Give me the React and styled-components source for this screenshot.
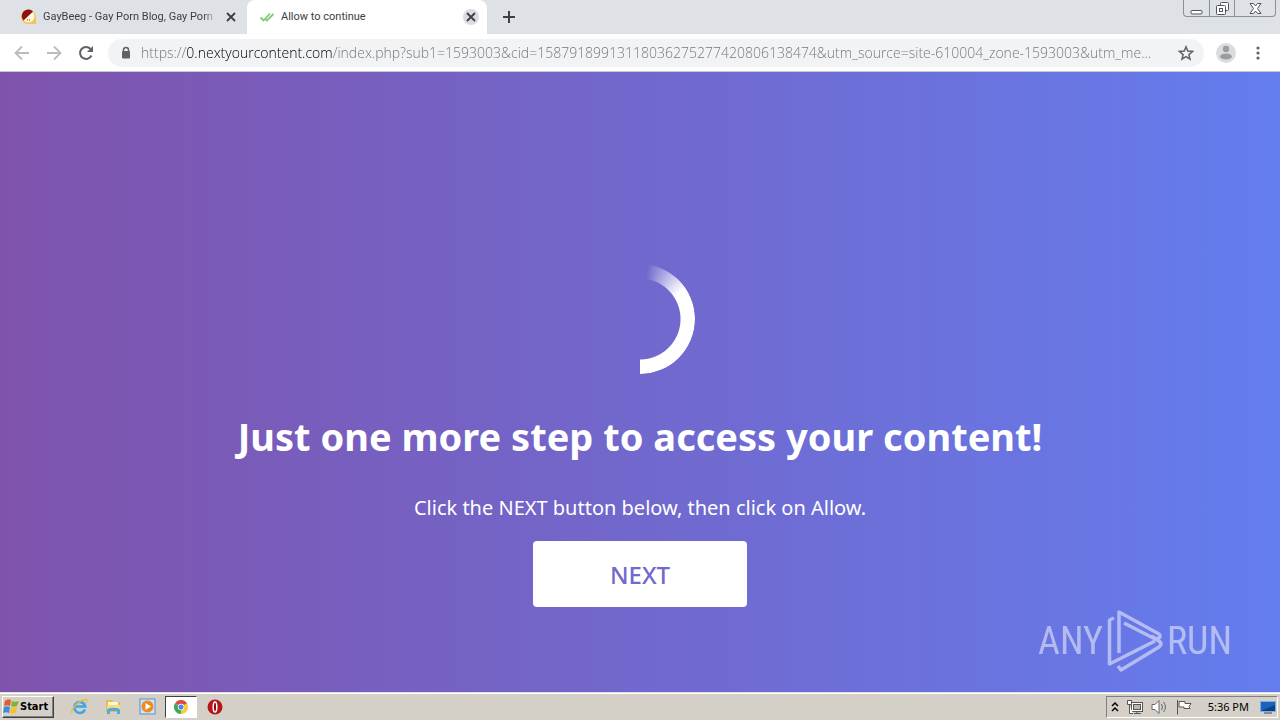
import React from 'react';
import styled, { createGlobalStyle } from 'styled-components'

const GlobalStyle = createGlobalStyle`
* { box-sizing: border-box; }
body {
  margin: 0;
  font-family: "Noto Sans", "Open Sans", sans-serif;
}
button {
  font-family: inherit;
  padding: 0;
  border: 0;
  background: none;
}
svg { display: block; flex: none; }
`

const Desktop = styled.div`
display: flex;
flex-direction: column;
min-height: 100vh;
`

const TabStrip = styled.div`
display: flex;
height: 34px;
background: #dee1e6;
`

const Tab = styled.div`
display: flex;
align-items: center;
gap: 6px;
width: ${props => props.$active ? '240px' : '247px'};
padding: 0 8px 0 ${props => props.$active ? '12px' : '20px'};
border-radius: 8px 8px 0 0;
background: ${props => props.$active ? '#ffffff' : 'transparent'};
`

const TabTitle = styled.button`
flex: 1;
min-width: 0;
overflow: hidden;
white-space: nowrap;
text-align: left;
font: 11px "Roboto", sans-serif;
line-height: 16px;
color: #3c4043;
`

const FadedTitle = styled(TabTitle)`
mask-image: linear-gradient(90deg, #000 92%, transparent);
`

const RoundButton = styled.button`
display: flex;
flex: none;
align-items: center;
justify-content: center;
width: 16px;
height: 16px;
border-radius: 50%;
background: ${props => props.$filled ? '#dadce0' : 'transparent'};
color: #3c4043;
`

const NewTab = styled(RoundButton)`
width: 28px;
height: 34px;
margin-left: 8px;
`

const WindowControls = styled.div`
display: flex;
height: 17px;
margin: 0 4px 0 auto;
border: 1px solid #8b8f9c;
border-top: 0;
border-radius: 0 0 4px 4px;
`

const WindowButton = styled.button`
display: flex;
align-items: center;
justify-content: center;
width: ${props => props.$wide ? '41px' : '25px'};
& + & { border-left: 1px solid #8b8f9c; }
`

const Toolbar = styled.div`
display: flex;
align-items: center;
height: 38px;
padding: 0 12px;
background: #ffffff;
border-bottom: 1px solid #c9c9d6;
`

const ToolButton = styled.button`
display: flex;
flex: none;
justify-content: center;
width: 20px;
color: ${props => props.$muted ? '#babcbe' : '#5f6368'};
`

const Navigation = styled.nav`
display: flex;
gap: 12px;
margin-right: 12px;
`

const AddressBar = styled.label`
display: flex;
flex: 1;
align-items: center;
height: 28px;
padding: 0 10px 0 12px;
border-radius: 14px;
background: #f1f3f4;
`

/* the host part of the address is darker than the rest */
const Address = styled.input`
flex: 1;
min-width: 0;
height: 24px;
margin: 0 14px 0 9px;
padding: 0;
border: 0;
outline: 0;
font: 300 14px "Open Sans", sans-serif;
color: transparent;
background: linear-gradient(90deg, #6f7377 45px, #000000 45px, #000000 192px, #6f7377 192px);
background-clip: text;
`

const Avatar = styled.button`
width: 20px;
margin: 0 12px;
`

const Page = styled.main`
position: relative;
display: flex;
flex: 1;
flex-direction: column;
align-items: center;
padding: 192px 20px 85px;
background: linear-gradient(90deg, #7f53ac, #647dee);
color: #ffffff;
text-align: center;
`

const Spinner = styled.div`
width: 110px;
height: 110px;
border-radius: 50%;
background: conic-gradient(transparent 8deg, #ffffff 56deg, #ffffff 180deg, transparent 180deg);
mask-image: radial-gradient(circle, transparent 40px, #000 41px);
`

const Heading = styled.h1`
margin: 34px 0 0;
font-size: 38px;
line-height: 56px;
`

const Hint = styled.p`
margin: 30px 0 0;
font-size: 20px;
line-height: 28px;
`

const NextButton = styled.button`
width: 214px;
height: 66px;
margin-top: 19px;
border-radius: 4px;
background: #ffffff;
color: #7268cd;
font-size: 24px;
font-weight: 500;
`

const Watermark = styled.div`
position: absolute;
right: 48px;
bottom: 20px;
display: flex;
align-items: center;
gap: 4px;
opacity: 0.5;
font: 38px "Roboto Condensed", "Liberation Sans Narrow", sans-serif;
`

const Taskbar = styled.footer`
display: flex;
align-items: center;
height: 28px;
padding: 0 2px;
background: #d4d0c8;
border-top: 1px solid #e4e2dd;
box-shadow: inset 0 1px #ffffff;
`

const StartButton = styled.button`
display: flex;
align-items: center;
width: 52px;
height: 22px;
margin-right: 9px;
border: 1px solid;
border-color: #ffffff #404040 #404040 #ffffff;
box-shadow: inset -1px -1px #808080;
font: bold 11px "DejaVu Sans Condensed", sans-serif;
color: #000000;
`

const TaskButton = styled.button`
display: flex;
align-items: center;
justify-content: center;
width: 32px;
height: 22px;
margin-right: 2px;
border: 1px solid transparent;
${props => props.$pressed && `
  background: #ffffff;
  border-color: #404040 #ffffff #ffffff #404040;
`}
`

const Tray = styled.div`
display: flex;
align-items: center;
gap: 8px;
height: 22px;
margin-left: auto;
padding: 0 1px 0 4px;
border: 1px solid;
border-color: #808080 #ffffff #ffffff #808080;
`

const Clock = styled.time`
margin: 0 3px 0 8px;
font: 11px "Noto Sans", sans-serif;
color: #000000;
`

const Cross = () => (
    <svg width="10" height="10" viewBox="0 0 10 10" stroke="currentColor" strokeWidth="1.800">
        <path d="M1 1l8 8M9 1L1 9" />
    </svg>
)

const SiteIcon = () => (
    <svg width="17" height="16" viewBox="0 0 17 16">
        <path d="M1 8a7.500 7.500 0 0 1 15 0v7H8a7 7 0 0 1-7-7z" fill="#f3c35c" />
        <circle cx="8.500" cy="7.500" r="6" fill="#fff4df" />
        <path d="M3.500 11.500A6.500 6.500 0 0 1 13 2.500z" fill="#8d1010" />
        <path d="M7 11h1M9 11h1" stroke="#b22" />
    </svg>
)

const Checks = () => (
    <svg width="16" height="16" viewBox="0 0 16 16" fill="none" stroke="#7fcb78" strokeWidth="1.800">
        <path d="M1.500 8.500l3 3L11 4.500M6.500 10l1.500 1.500L14.500 5" />
    </svg>
)

const Arrow = ({ flip }) => (
    <svg width="16" height="16" viewBox="0 0 16 16" fill="none" stroke="currentColor" strokeWidth="1.800">
        <path d={flip ? 'M1 8h13M8 1.500L14.500 8 8 14.500' : 'M15 8H2M8 1.500L1.500 8 8 14.500'} />
    </svg>
)

const Reload = () => (
    <svg width="16" height="16" viewBox="0 0 16 16">
        <path d="M13.500 10.500A6 6 0 1 1 12.600 4" fill="none" stroke="currentColor" strokeWidth="2" />
        <path d="M15 1v6H9z" fill="currentColor" />
    </svg>
)

const Lock = () => (
    <svg width="12" height="14" viewBox="0 0 12 14">
        <path d="M3.500 6V4a2.500 2.500 0 0 1 5 0v2" fill="none" stroke="#5f6368" strokeWidth="1.500" />
        <rect x="2" y="5" width="8" height="7.500" rx="1" fill="#5f6368" />
    </svg>
)

const Star = () => (
    <svg width="16" height="16" viewBox="0 0 16 16" fill="none" stroke="#5f6368" strokeWidth="1.500">
        <path d="M8 1.800l1.800 4.300 4.700.4-3.600 3.100 1.100 4.600L8 11.700l-4 2.500 1.100-4.600L1.500 6.500l4.700-.4z" />
    </svg>
)

const Person = () => (
    <svg width="20" height="20" viewBox="0 0 20 20">
        <circle cx="10" cy="10" r="10" fill="#dadce0" />
        <circle cx="10" cy="6" r="3.200" fill="#9a9da1" />
        <ellipse cx="10" cy="13.500" rx="6" ry="3" fill="#9a9da1" />
    </svg>
)

const Dots = () => (
    <svg width="4" height="14" viewBox="0 0 4 14" fill="#5f6368">
        <circle cx="2" cy="2" r="1.600" />
        <circle cx="2" cy="7" r="1.600" />
        <circle cx="2" cy="12" r="1.600" />
    </svg>
)

const PlayLogo = () => (
    <svg width="56" height="62" viewBox="0 0 56 62" fill="none" stroke="#ffffff" strokeWidth="3.500" strokeLinejoin="round">
        <path d="M7 8L2.500 10V54L48 31" />
        <path d="M12 43V2L52 24Q55 27 50 29L44 26" />
        <path d="M11 56L14 60L52 37Q56 34 52 31L17 13" />
    </svg>
)

const Flag = () => (
    <svg width="17" height="17" viewBox="0 0 17 17">
        <path d="M8 2C5 1 3 2 2 3L1 8c2-1 4-1 6 0z" fill="#e8592b" />
        <path d="M9 3c2 1 4 1 7 0l-2 5c-2 1-4 1-6 0z" fill="#7cb82f" />
        <path d="M1 9c2-1 4-1 6 0l-1 6c-2-1-4-1-6 0z" fill="#3b8ede" />
        <path d="M8 9c2 1 4 1 6 0l-1 5c-2 2-4 2-6 1z" fill="#fbc12d" />
    </svg>
)

const Explorer = () => (
    <svg width="17" height="17" viewBox="0 0 17 17" fill="none">
        <path d="M14 11.500A5.500 5.500 0 1 1 14.300 8.500H5" stroke="#3fa5e6" strokeWidth="2.600" />
        <path d="M1 15C-1 12 7 3 14 1.500c3-.5 2 2 1 3.500" stroke="#e9bd3a" strokeWidth="1.300" />
    </svg>
)

const Folder = () => (
    <svg width="17" height="17" viewBox="0 0 17 17">
        <path d="M1 2h6l1 2h7v10H1z" fill="#e3bd54" />
        <path d="M3 4h10v3H3z" fill="#fff7d0" />
        <path d="M2 7h13v6H2z" fill="#f3dc88" />
        <path d="M2 16v-4c0-3 13-3 13 0v4h-3v-3H5v3z" fill="#55a9df" />
    </svg>
)

const Player = () => (
    <svg width="17" height="17" viewBox="0 0 17 17">
        <rect x="1" y="1" width="15" height="15" fill="#cfe4f7" stroke="#5590cf" />
        <circle cx="8.500" cy="8.500" r="6" fill="#ef8b1c" />
        <path d="M6.500 5v7l5.500-3.500z" fill="#fff" />
    </svg>
)

const Chrome = () => (
    <svg width="14" height="14" viewBox="0 0 16 16">
        <path d="M8 8L1.070 4A8 8 0 0 1 14.930 4z" fill="#df4a3c" />
        <path d="M8 8l6.930-4A8 8 0 0 1 8 16z" fill="#fbcc35" />
        <path d="M8 8v8A8 8 0 0 1 1.070 4z" fill="#3fa757" />
        <circle cx="8" cy="8" r="3.700" fill="#fff" />
        <circle cx="8" cy="8" r="2.900" fill="#4a86e8" />
    </svg>
)

const Opera = () => (
    <svg width="16" height="16" viewBox="0 0 16 16">
        <circle cx="8" cy="8" r="7.500" fill="#b5141b" />
        <ellipse cx="8" cy="8" rx="1.800" ry="5" fill="#8a0a10" stroke="#fff" strokeWidth="1.500" />
    </svg>
)

const pinned = [
    { name: 'Internet Explorer', icon: <Explorer /> },
    { name: 'Windows Explorer', icon: <Folder /> },
    { name: 'Media Player', icon: <Player /> },
    { name: 'Chrome', icon: <Chrome />, pressed: true },
    { name: 'Opera', icon: <Opera /> },
]

const url = 'https://0.nextyourcontent.com/index.php?sub1=1593003&cid=15879189913118036275277420806138474&utm_source=site-610004_zone-1593003&utm_me...'

const App = () => (
    <Desktop>
        <GlobalStyle />
        <TabStrip>
            <Tab>
                <SiteIcon />
                <FadedTitle>GayBeeg - Gay Porn Blog, Gay Porn</FadedTitle>
                <RoundButton aria-label="Close tab"><Cross /></RoundButton>
            </Tab>
            <Tab $active>
                <Checks />
                <TabTitle>Allow to continue</TabTitle>
                <RoundButton $filled aria-label="Close tab"><Cross /></RoundButton>
            </Tab>
            <NewTab aria-label="New tab">
                <svg width="12" height="12" viewBox="0 0 12 12" stroke="currentColor" strokeWidth="2">
                    <path d="M6 0v12M0 6h12" />
                </svg>
            </NewTab>
            <WindowControls>
                <WindowButton aria-label="Minimize">
                    <svg width="13" height="13" viewBox="0 0 13 13" fill="#fff" stroke="#50545f">
                        <rect x="1" y="8.500" width="11" height="3.500" rx="1" />
                    </svg>
                </WindowButton>
                <WindowButton aria-label="Restore">
                    <svg width="13" height="13" viewBox="0 0 13 13" fill="#fff" stroke="#50545f">
                        <rect x="4.500" y=".5" width="8" height="8" rx="1" />
                        <rect x=".5" y="3.500" width="9" height="9" rx="1" />
                        <rect x="3.500" y="6.500" width="3" height="3" />
                    </svg>
                </WindowButton>
                <WindowButton $wide aria-label="Close">
                    <svg width="13" height="11" viewBox="0 0 13 11" fill="#fff" stroke="#50545f">
                        <path d="M1 .5h3.500l2 2.500 2-2.500H12L8.500 5.500 12 10.500H8.500l-2-2.500-2 2.500H1l3.500-5z" />
                    </svg>
                </WindowButton>
            </WindowControls>
        </TabStrip>
        <Toolbar>
            <Navigation>
                <ToolButton $muted aria-label="Back"><Arrow /></ToolButton>
                <ToolButton $muted aria-label="Forward"><Arrow flip /></ToolButton>
                <ToolButton aria-label="Reload"><Reload /></ToolButton>
            </Navigation>
            <AddressBar>
                <Lock />
                <Address aria-label="Address" defaultValue={url} />
                <Star />
            </AddressBar>
            <Avatar aria-label="Profile"><Person /></Avatar>
            <ToolButton aria-label="Menu"><Dots /></ToolButton>
        </Toolbar>
        <Page>
            <Spinner />
            <Heading>Just one more step to access your content!</Heading>
            <Hint>Click the NEXT button below, then click on Allow.</Hint>
            <NextButton>NEXT</NextButton>
            <Watermark>
                <span>ANY</span>
                <PlayLogo />
                <span>RUN</span>
            </Watermark>
        </Page>
        <Taskbar>
            <StartButton><Flag />Start</StartButton>
            {pinned.map(item => (
                <TaskButton key={item.name} $pressed={item.pressed} aria-label={item.name}>
                    {item.icon}
                </TaskButton>
            ))}
            <Tray>
                <svg width="8" height="12" viewBox="0 0 8 12" fill="none" stroke="#000" strokeWidth="1.500">
                    <path d="M1 5l3-3 3 3M1 10l3-3 3 3" />
                </svg>
                <svg width="16" height="16" viewBox="0 0 16 16" fill="#fff" stroke="#555">
                    <rect x="4.500" y="3.500" width="11" height="9" />
                    <rect x="6.500" y="5.500" width="7" height="5" fill="#b8b8b4" />
                    <path d="M7 14.500h7M10 12v2M.5 1.500h4v4h-4zM2.500 6v8.500H6" />
                </svg>
                <svg width="17" height="16" viewBox="0 0 17 16" fill="#fff" stroke="#666">
                    <path d="M1 5.500h3l4-4v13l-4-4H1z" />
                    <path d="M10.500 5q2 3 0 6M12.500 3q4 5 0 10" fill="none" />
                </svg>
                <svg width="16" height="16" viewBox="0 0 16 16" fill="#fff" stroke="#555">
                    <path d="M1.500 1v14.500M3 2.500h6v2h6l-2 3 1 2H8V8H3z" />
                </svg>
                <Clock>5:36 PM</Clock>
                <svg width="16" height="14" viewBox="0 0 16 14">
                    <rect x=".5" y="1.500" width="15" height="10" fill="#1c62b8" stroke="#79aee6" />
                    <path d="M1 11L15 5v6z" fill="#0c3f86" />
                    <path d="M4 13h8" stroke="#444" />
                </svg>
            </Tray>
        </Taskbar>
    </Desktop>
);

export default App;
